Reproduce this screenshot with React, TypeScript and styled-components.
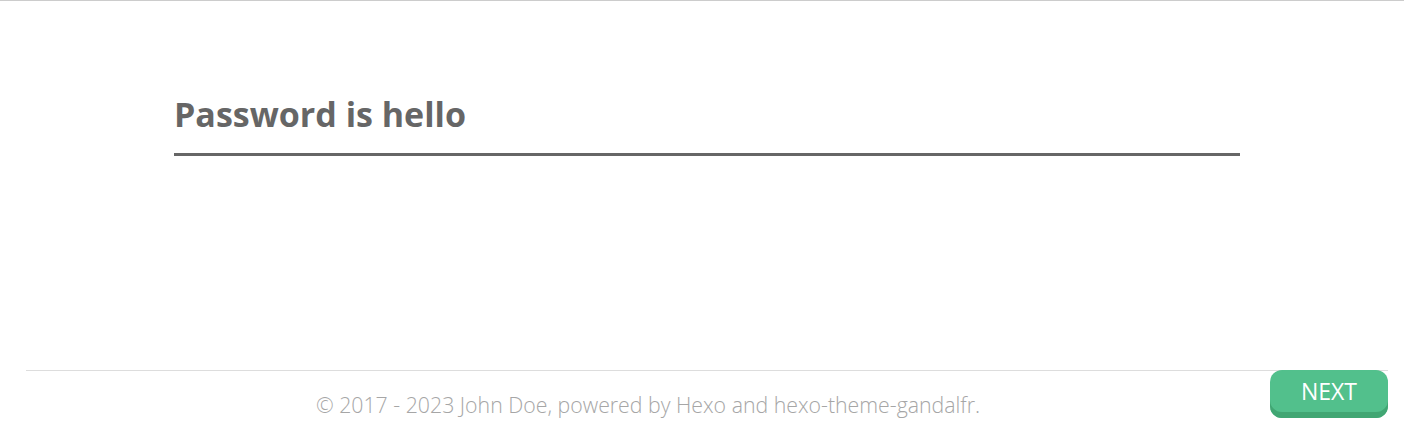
import React from "react";
import styled, { createGlobalStyle } from "styled-components";

const Global = createGlobalStyle`
  html, body { margin: 0; padding: 0; background: #fff; }
  body { font-family: "Open Sans", "Noto Sans", sans-serif; }
`;

const Page = styled.div`
  border-top: 1px solid #cccccc;
  height: 425px;
  display: flex;
  flex-direction: column;
`;

const Article = styled.main`
  padding: 0 164px 0 174px;
  height: 369px;
`;

const Title = styled.h1`
  margin: 88px 0 0;
  padding: 0 0 14px;
  font-size: 34px;
  line-height: 50px;
  font-weight: 700;
  color: #666666;
  border-bottom: 3px solid #666666;
`;

const Footer = styled.footer`
  margin: 0 16px 0 26px;
  border-top: 1px solid #dddddd;
  display: flex;
  align-items: flex-start;
`;

const Copy = styled.p`
  flex: 1;
  margin: 19px 0 0;
  text-align: center;
  font-size: 21.3px;
  line-height: 30px;
  font-weight: 300;
  color: #a6a6a6;
`;

const NextButton = styled.button`
  margin-top: -1px;
  width: 118px;
  height: 48px;
  border: none;
  border-radius: 12px;
  background: #52c08c;
  box-shadow: inset 0 -6px 0 #41a673;
  color: #ffffff;
  font-family: "Open Sans", "Noto Sans", sans-serif;
  font-size: 23px;
  font-weight: 400;
  padding: 0 0 6px;
  cursor: pointer;
`;

export default function App() {
  return (
    <>
      <Global />
      <Page>
        <Article>
          <Title>Password is hello</Title>
        </Article>
        <Footer>
          <Copy>© 2017 - 2023 John Doe, powered by Hexo and hexo-theme-gandalfr.</Copy>
          <NextButton>NEXT</NextButton>
        </Footer>
      </Page>
    </>
  );
}
